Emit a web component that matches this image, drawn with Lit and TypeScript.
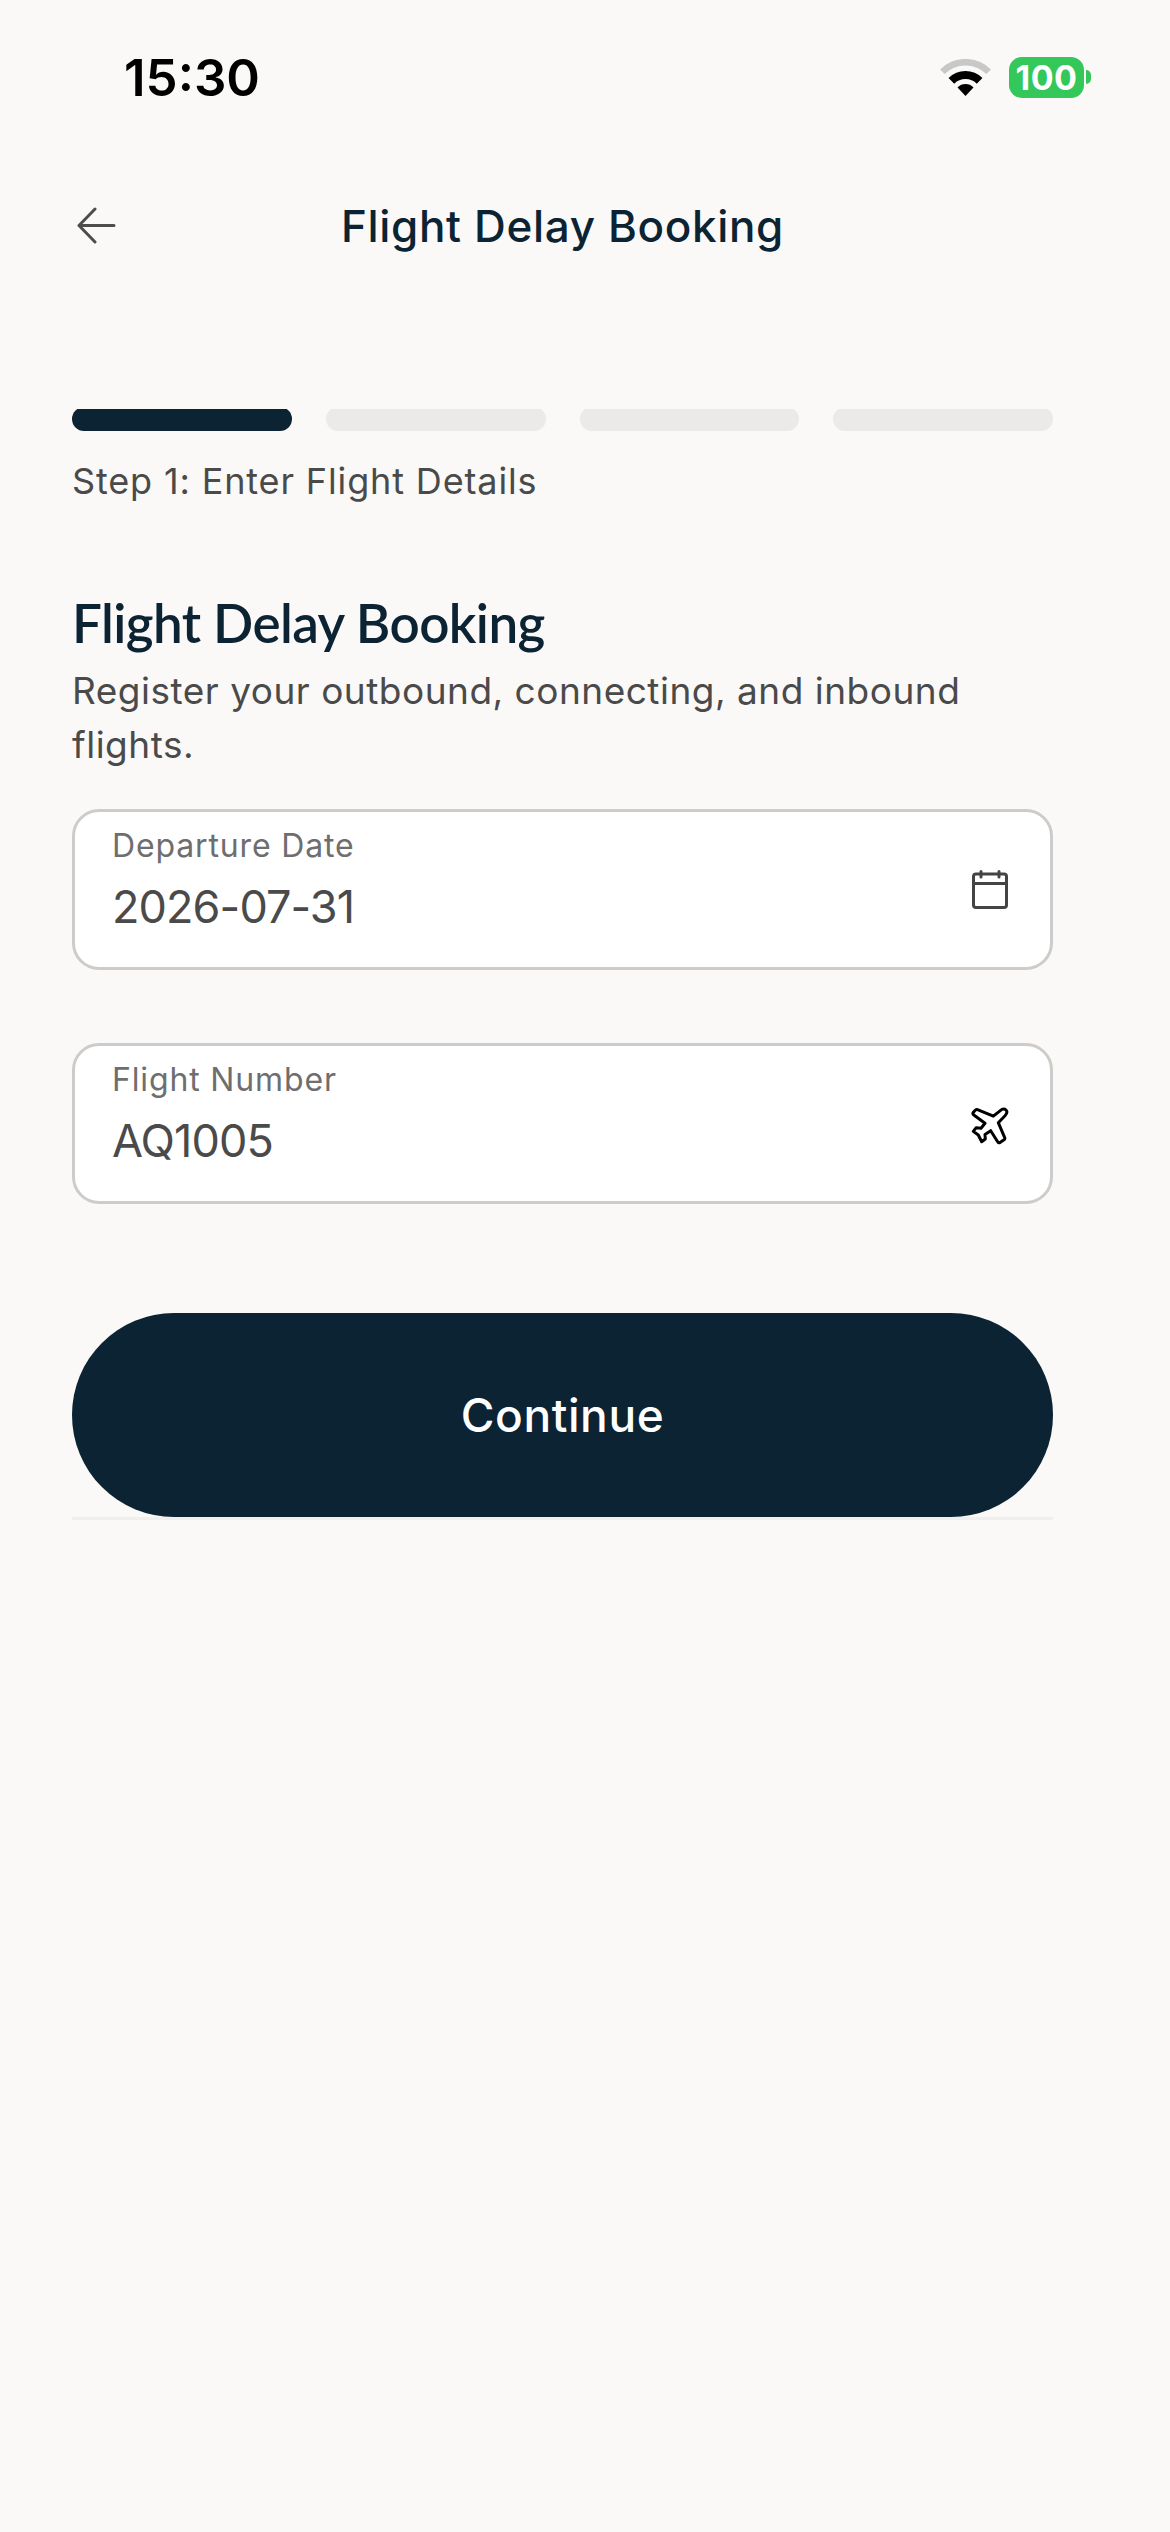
import { LitElement, html, css } from "lit";
import { customElement } from "lit/decorators.js";

@customElement("app-root")
export class AppRoot extends LitElement {
  static styles = css`
    :host { display: block; width: 1170px; min-height: 2532px; background: #faf9f7; font-family: "Inter", "Liberation Sans", sans-serif; color: #4a4a4a; }
    .status { height: 154px; box-sizing: border-box; display: flex; align-items: center; padding: 0 79px 0 124px; }
    .time { font-size: 51px; font-weight: 600; color: #000; letter-spacing: 0; flex: 1; }
    .wifi { width: 51px; height: 37px; display: block; margin-right: 18px; }
    .batt { width: 75px; height: 41px; border-radius: 13px; background: #34c759; color: #fff; font-size: 34px; font-weight: 700; letter-spacing: 0.5px; display: flex; align-items: center; justify-content: center; }
    .nub { width: 5px; height: 14px; margin-left: 2px; background: #34c759; border-radius: 0 7px 7px 0; }
    .content { padding: 0 117px 0 72px; }
    .header { height: 144px; display: flex; align-items: center; position: relative; justify-content: center; }
    .back { position: absolute; left: 5px; top: 53px; width: 39px; height: 37px; display: block; }
    .title { font-size: 44px; font-weight: 500; color: #0b2333; letter-spacing: 0.65px; }
    .progress { margin-top: 111px; height: 22px; overflow: hidden; display: flex; align-items: flex-end; gap: 34px; }
    .bar { flex: 1; height: 24px; border-radius: 12px; background: #ebeae8; }
    .bar.on { background: #0b2333; }
    .step { margin-top: 23px; font-size: 36px; line-height: 54px; letter-spacing: 0.86px; }
    .h { margin-top: 80px; font-family: "Lato", sans-serif; font-weight: 600; font-size: 53px; line-height: 70px; color: #0b2333; letter-spacing: -0.6px; }
    .sub { margin-top: 6px; font-size: 37px; line-height: 53.5px; letter-spacing: 0.5px; }
    .field { height: 161px; box-sizing: border-box; border: 3px solid #cdcccb; border-radius: 27px; background: #fff; display: flex; align-items: center; justify-content: space-between; padding: 0 42px 0 37px; }
    .f1 { margin-top: 38px; }
    .f2 { margin-top: 73px; }
    .label { font-size: 32px; line-height: 38px; color: #6e6e6e; letter-spacing: 0.85px; }
    .value { font-size: 45px; line-height: 60px; margin-top: 12px; letter-spacing: -0.9px; }
    .texts { align-self: flex-start; padding-top: 15px; }
    .cal { width: 36px; height: 39px; display: block; }
    .plane { width: 38px; height: 38px; display: block; margin-right: -1px; margin-top: 5px; }
    .btn { margin-top: 109px; height: 204px; border-radius: 102px; background: #0b2333; color: #fff; font-size: 46px; font-weight: 500; letter-spacing: 0.6px; display: flex; align-items: center; justify-content: center; }
    .rule { height: 3px; background: #f0efed; }
  `;

  render() {
    return html`
      <div class="status">
        <div class="time">15:30</div>
        <svg class="wifi" viewBox="0 0 51 37">
          <path d="M2.3 12.8A32.75 32.75 0 0 1 48.7 12.8" fill="none" stroke="#c8c8c8" stroke-width="6.5"/>
          <path d="M11.4 21.9A20 20 0 0 1 39.6 21.9" fill="none" stroke="#000" stroke-width="8"/>
          <path d="M25.5 37L17.5 28.5A11 11 0 0 1 33.5 28.5Z" fill="#000"/>
        </svg>
        <div class="batt">100</div>
        <div class="nub"></div>
      </div>
      <div class="content">
        <div class="header">
          <svg class="back" viewBox="0 0 39 37"><path d="M37 18.5H2M18 2L2 18.5L18 35" fill="none" stroke="#4d4d4d" stroke-width="3" stroke-linecap="round" stroke-linejoin="round"/></svg>
          <div class="title">Flight Delay Booking</div>
        </div>
        <div class="progress">
          <div class="bar on"></div><div class="bar"></div><div class="bar"></div><div class="bar"></div>
        </div>
        <div class="step">Step 1: Enter Flight Details</div>
        <div class="h">Flight Delay Booking</div>
        <div class="sub">Register your outbound, connecting, and inbound flights.</div>
        <div class="field f1">
          <div class="texts"><div class="label">Departure Date</div><div class="value">2026-07-31</div></div>
          <svg class="cal" viewBox="0 0 36 39" fill="none" stroke="#444" stroke-width="3" stroke-linecap="round">
            <rect x="1.5" y="4" width="33" height="33.5" rx="2.5"/><path d="M1.5 13.5H34.5M9 1.5V7M27 1.5V7"/>
          </svg>
        </div>
        <div class="field f2">
          <div class="texts"><div class="label">Flight Number</div><div class="value">AQ1005</div></div>
          <svg class="plane" viewBox="-1 -1 38 38" fill="none" stroke="#000" stroke-width="3" stroke-linejoin="round" stroke-linecap="round">
            <path d="M33 7.7C35 5.5 35.2 3.2 34 2C32.5 .6 30 1 28 2.8L21.3 8.2L5.5 1.6C4.8 1.3 4 1.5 3.5 2L1.2 4.6C.6 5.3 .8 6.2 1.5 6.7L13 15.3L9 20.3L4 19.8L1.3 23.4L6.3 27L9.7 33.7L13.3 31L13 26.5L18.7 22.7L25.8 34C26.3 34.8 27.3 35 28 34.5L32 31.8C32.8 31.2 33 30.4 32.7 29.6L26.3 14.7Z"/>
          </svg>
        </div>
        <div class="btn">Continue</div>
        <div class="rule"></div>
      </div>
    `;
  }
}
